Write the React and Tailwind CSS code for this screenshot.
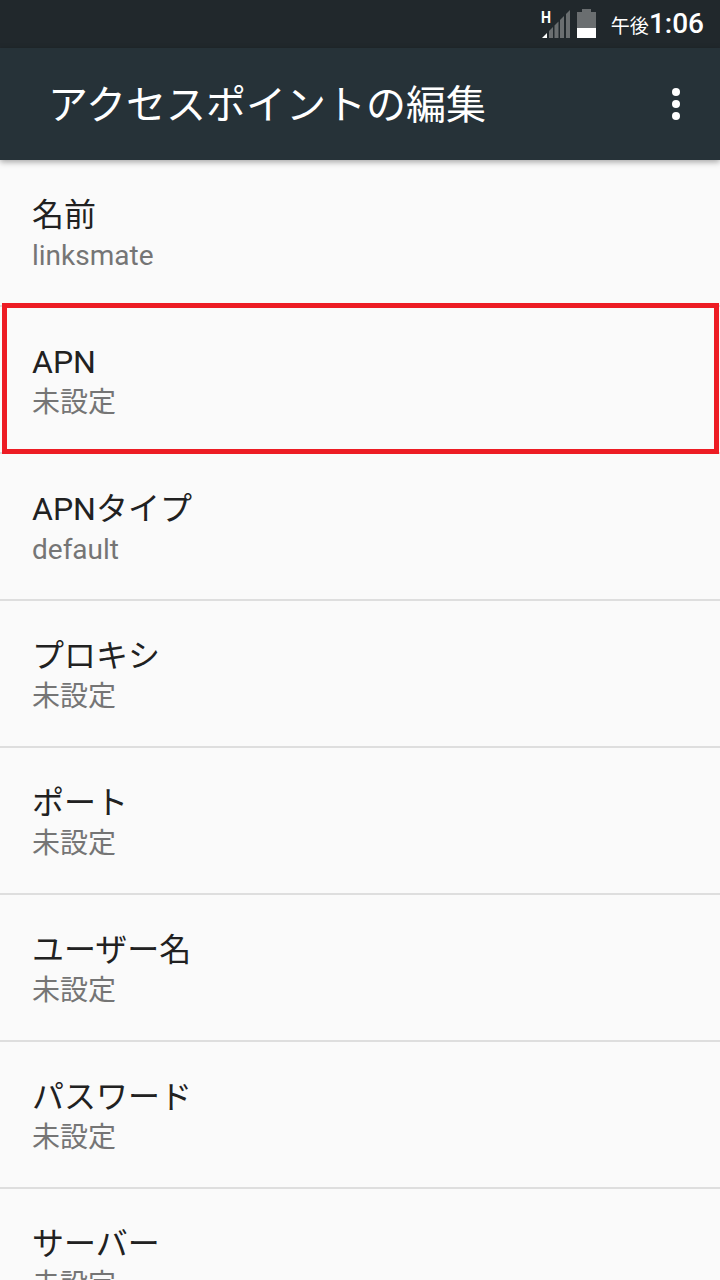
const rows = [
  { title: "名前", value: "linksmate" },
  { title: "APN", value: "未設定" },
  { title: "APNタイプ", value: "default" },
  { title: "プロキシ", value: "未設定" },
  { title: "ポート", value: "未設定" },
  { title: "ユーザー名", value: "未設定" },
  { title: "パスワード", value: "未設定" },
  { title: "サーバー", value: "未設定" },
];

function StatusBar() {
  return (
    <div className="h-12 bg-[#21282c] flex items-center justify-end pr-4 shrink-0">
      <svg width="60" height="40" viewBox="0 0 60 40" className="mr-3 shrink-0">
        <text x="2" y="19" fontSize="16" fontWeight="700" fill="#fff" fontFamily="Roboto, sans-serif" textLength="10" lengthAdjust="spacingAndGlyphs">H</text>
        <path d="M3 34 L8 29 L8 34 Z" fill="#fff" />
        <path d="M10 27 L14 23 L14 34 L10 34 Z M15.5 21.5 L19.5 17.5 L19.5 34 L15.5 34 Z M21 16 L25 12 L25 34 L21 34 Z M27 10 L31 6 L31 34 L27 34 Z" fill="#6a6e70" />
        <path d="M38 8 H43 V5 H52 V8 H57 V24 H38 Z" fill="#6a6e70" />
        <rect x="38" y="24" width="19" height="10" fill="#fff" />
      </svg>
      <span className="text-white text-[19px] leading-none mt-1">午後</span>
      <span className="text-white text-[28px] font-medium leading-none">1:06</span>
    </div>
  );
}

function Toolbar() {
  return (
    <div className="h-28 bg-[#263238] flex items-center justify-between pl-12 pr-10 shrink-0 relative z-10 shadow-[0_2px_6px_rgba(0,0,0,0.35)]">
      <h1 className="text-white text-[40px] font-normal leading-none mt-1">アクセスポイントの編集</h1>
      <div className="flex flex-col gap-1">
        <span className="w-2 h-2 rounded-full bg-white" />
        <span className="w-2 h-2 rounded-full bg-white" />
        <span className="w-2 h-2 rounded-full bg-white" />
      </div>
    </div>
  );
}

export default function App() {
  return (
    <div className="relative w-[720px] h-[1280px] overflow-hidden bg-[#fafafa] flex flex-col font-['Roboto','Noto_Sans_CJK_JP',sans-serif]">
      <StatusBar />
      <Toolbar />
      <div className="flex-1 overflow-hidden">
        {rows.map((row) => (
          <div key={row.title} className="h-[147px] border-b-2 border-[#dedede] pl-8 pt-[35px]">
            <div className="text-[32px] leading-10 text-[#212121]">{row.title}</div>
            <div className="text-[28px] leading-[42px] text-[#757575]">{row.value}</div>
          </div>
        ))}
      </div>
      {/* 赤枠 */}
      <div className="absolute left-[2px] top-[303px] w-[717px] h-[151px] border-[5px] border-[#ed1c24]" />
    </div>
  );
}
